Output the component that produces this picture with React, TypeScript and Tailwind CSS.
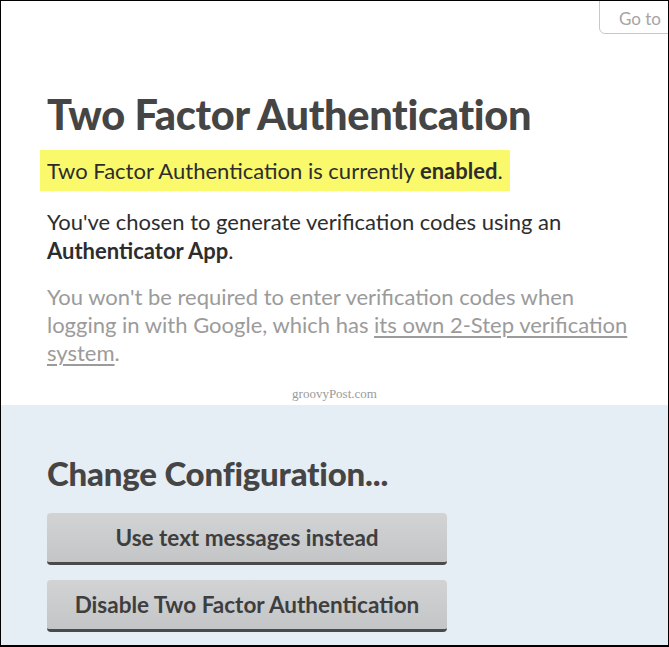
const font = { fontFamily: 'Lato, "Open Sans", sans-serif' };

export default function App() {
  return (
    <div
      className="relative flex h-[647px] w-[669px] flex-col overflow-hidden border-x border-t border-b-2 border-black bg-white"
      style={font}
    >
      {/* partially visible header button */}
      <div className="absolute top-[-2px] left-[598px] h-[35px] w-[90px] rounded-bl-md border border-[#c8c8c8] bg-white pt-[6px] pl-[19px] text-[17px] text-[#a5a5a5]">
        Go to
      </div>

      <section className="pl-[46px] pr-[30px] pt-[91px]">
        <h1 className="text-[41.5px] leading-[45px] font-black tracking-[-0.3px] text-[#454545]">
          Two Factor Authentication
        </h1>
        <p className="mt-[13px] -ml-[7px] inline-block bg-[#f9f96b] px-[7px] py-[6px] text-[22px] leading-[29px] text-[#2d2d2d]">
          Two Factor Authentication is currently <b className="font-bold">enabled</b>.
        </p>
        <p className="mt-[16px] text-[22px] leading-[29px] text-[#2d2d2d]">
          You've chosen to generate verification codes using an{' '}
          <b className="font-bold">Authenticator App</b>.
        </p>
        <p className="mt-[18px] text-[22px] leading-[28px] text-[#9b9b9b]">
          You won't be required to enter verification codes when logging in with Google, which has{' '}
          <span className="underline underline-offset-[3px]">its own 2-Step verification system</span>.
        </p>
        <div
          className="mt-[19px] -ml-[16px] text-center text-[13px] leading-[16px] text-[#9a9a9a]"
          style={{ fontFamily: '"Liberation Serif", serif' }}
        >
          groovyPost.com
        </div>
      </section>

      <section className="mt-[3px] flex-1 bg-[#e5eef4] px-[46px] pt-[50px]">
        <h2 className="text-[33px] leading-[37px] font-black tracking-[-0.2px] text-[#454545]">
          Change Configuration...
        </h2>
        <div className="mt-[21px] flex w-[400px] flex-col gap-[15px]">
          <button className="h-[52px] rounded-[4px] border-b-[3px] border-[#4a4a4a] bg-gradient-to-b from-[#d2d3d5] to-[#c4c5c7] text-[22.5px] font-bold text-[#3e3e3e]">
            Use text messages instead
          </button>
          <button className="h-[52px] rounded-[4px] border-b-[3px] border-[#4a4a4a] bg-gradient-to-b from-[#d2d3d5] to-[#c4c5c7] text-[22.5px] font-bold text-[#3e3e3e]">
            Disable Two Factor Authentication
          </button>
        </div>
      </section>
    </div>
  );
}
